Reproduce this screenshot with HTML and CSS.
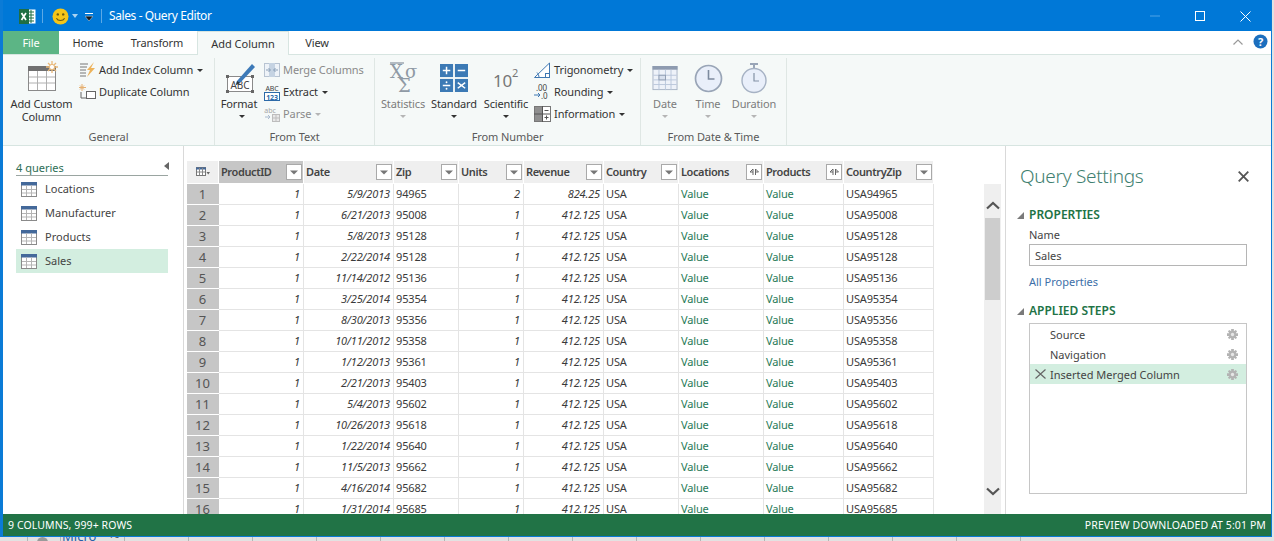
FILE: index.html
```html
<!DOCTYPE html>
<html lang="en">
<head>
<meta charset="utf-8">
<title>Sales - Query Editor</title>
<link rel="stylesheet" href="styles.css">
</head>
<body>
<svg class="sprites" width="0" height="0" aria-hidden="true">
  <symbol id="qtable" viewBox="0 0 16 15"><rect x=".5" y=".5" width="15" height="14" fill="#fff" stroke="#8a8a8a"/><rect x="0" y="0" width="16" height="3.5" fill="#44699a"/><path d="M5.5 3v11M10.5 3v11M1 7.5h14M1 11h14" stroke="#b5b5b5" fill="none"/></symbol>
  <symbol id="gear" viewBox="0 0 12 12"><path d="M4.500 0h3v2.500L9.500 1 11 2.500 9.500 4.500H12v3H9.500L11 9.500 9.500 11 7.500 9.500V12h-3V9.500L2.500 11 1 9.500l1.500-2H0v-3h2.500L1 2.500 2.500 1l2 1.500z" fill="#b3b3b3"/><circle cx="6" cy="6" r="1.800" fill="#e6e6e6"/></symbol>
  <symbol id="filt" viewBox="0 0 16 16"><rect x=".5" y=".5" width="15" height="15" fill="#fff" stroke="#a9a9a9"/><path d="M4 6.5h8L8 10.5z" fill="#777"/></symbol>
  <symbol id="expand" viewBox="0 0 16 16"><rect x=".5" y=".5" width="15" height="15" fill="#fff" stroke="#a9a9a9"/><path d="M7 5v6M7 5L4 8h3M9.500 5v6M9.500 5l3 3h-3" stroke="#666" fill="none"/></symbol>
</svg>
<div class="window">
  <header class="titlebar">
    <svg class="xl" width="17" height="17" viewBox="0 0 17 17"><rect x="6" y="1.500" width="10.500" height="14" fill="#fff"/><path d="M10 4h5M10 7h5M10 10h5M10 13h5M12 2v13" stroke="#1f6e43" stroke-width="1"/><rect x="0" y="1" width="10" height="15" fill="#1f6e43"/><path d="M2.500 5l4.500 7M7 5l-4.500 7" stroke="#fff" stroke-width="1.700"/></svg>
    <span class="qsep"></span>
    <svg class="smile" width="17" height="17" viewBox="0 0 17 17"><circle cx="8.500" cy="8.500" r="8" fill="#f5c518"/><circle cx="5.800" cy="6.400" r="1.200" fill="#6d5a10"/><circle cx="11.200" cy="6.400" r="1.200" fill="#6d5a10"/><path d="M4.400 10.200c1.600 3 6.600 3 8.200 0" stroke="#6d5a10" stroke-width="1.100" fill="none"/></svg>
    <svg class="smallcaret" width="6" height="4" viewBox="0 0 6 4"><path d="M0 0h6L3 4z" fill="#a8d3f2"/></svg>
    <svg class="qat" width="8" height="8" viewBox="0 0 8 8"><path d="M0 .5h8" stroke="#fff"/><path d="M0 3.200h8L4 8z" fill="#1a1a1a" stroke="#fff" stroke-width=".4"/></svg>
    <span class="qsep second"></span>
    <span class="wintitle">Sales - Query Editor</span>
    <div class="winbtns">
      <svg width="10" height="2" viewBox="0 0 10 2"><path d="M0 1h10" stroke="#4ea3e6"/></svg>
      <svg width="10" height="10" viewBox="0 0 10 10"><rect x=".5" y=".5" width="9" height="9" fill="none" stroke="#fff"/></svg>
      <svg width="11" height="11" viewBox="0 0 11 11"><path d="M.5.500l10 10M10.500.500l-10 10" stroke="#fff"/></svg>
    </div>
  </header>

  <nav class="tabs">
    <span class="tab tab-file">File</span>
    <span class="tab tab-home">Home</span>
    <span class="tab tab-transform">Transform</span>
    <span class="tab tab-active">Add Column</span>
    <span class="tab tab-view">View</span>
    <span class="tabs-end">
      <svg width="10" height="6" viewBox="0 0 10 6"><path d="M.5 5.500L5 1l4.500 4.500" stroke="#9a9a9a" fill="none" stroke-width="1.200"/></svg>
      <svg width="15" height="15" viewBox="0 0 15 15"><circle cx="7.500" cy="7.500" r="7" fill="#1c6fbe"/><text x="7.500" y="11.500" text-anchor="middle" class="helpq">?</text></svg>
    </span>
  </nav>

  <section class="ribbon">
    <div class="group g-general">
      <div class="group-body">
        <div class="big big-custom">
          <svg width="30" height="30" viewBox="0 0 30 30"><rect x=".5" y="5.500" width="27" height="24" fill="#fff" stroke="#8a8a8a"/><rect x="0" y="5" width="28" height="5" fill="#707070"/><path d="M9.500 10v19M18.500 10v19M1 16h26M1 22h26" stroke="#b0b0b0" fill="none"/><path d="M24 0v12M18 6h12M20 2l8 8M28 2l-8 8" stroke="#e9b878" stroke-width="1.300"/><circle cx="24" cy="6" r="2.600" fill="#fff" stroke="#e9b878"/></svg>
          <span class="big-label">Add Custom<br>Column</span>
        </div>
        <div class="smalls">
          <div class="small"><svg width="17" height="16" viewBox="0 0 17 16"><path d="M1 2h8M1 5h7M1 8h6M1 11h6M1 14h6" stroke="#777"/><path d="M15 0L8 8h3l-3 7 8-9h-4z" fill="#edb35b"/></svg><span>Add Index Column</span><i class="caret"></i></div>
          <div class="small"><svg width="17" height="16" viewBox="0 0 17 16"><path d="M3 0v7M0 3.500h7M1 1.500l4 4M5 1.500l-4 4" stroke="#e6b071"/><path d="M2 8v6h5" stroke="#666" fill="none"/><rect x="7.500" y="7.500" width="9" height="7" fill="#fff" stroke="#666"/></svg><span>Duplicate Column</span></div>
        </div>
      </div>
      <div class="group-label">General</div>
    </div>
    <div class="group g-text">
      <div class="group-body">
        <div class="big big-format">
          <svg width="32" height="34" viewBox="0 0 32 34"><rect x="1.500" y="15.500" width="25" height="15" fill="#fff" stroke="#8a8a8a"/><rect x="0" y="14" width="3" height="3" fill="#666"/><rect x="25" y="14" width="3" height="3" fill="#666"/><rect x="0" y="29" width="3" height="3" fill="#666"/><rect x="25" y="29" width="3" height="3" fill="#666"/><text x="14" y="28" text-anchor="middle" class="abc">ABC</text><path d="M11 20L26 3l3 3-15 16-4 2z" fill="#3d7ab8"/><path d="M11 20l-1 4 4-2z" fill="#333"/></svg>
          <span class="big-label">Format</span>
          <i class="caret caret-under"></i>
        </div>
        <div class="smalls">
          <div class="small dim"><svg width="16" height="14" viewBox="0 0 16 14"><rect x=".5" y=".5" width="15" height="13" fill="#eef3f8" stroke="#b8c4d2"/><rect x="5" y="0" width="6" height="14" fill="#c5d3e2"/><path d="M2 7h4M14 7h-4M4.500 5l2 2-2 2M11.500 5l-2 2 2 2" stroke="#8aa0b8" fill="none"/></svg><span>Merge Columns</span></div>
          <div class="small"><svg width="16" height="17" viewBox="0 0 16 17"><text x="8" y="7" text-anchor="middle" class="mini">ABC</text><rect x=".5" y="8.500" width="15" height="8" fill="#fff" stroke="#2c6aa8"/><text x="8" y="15.500" text-anchor="middle" class="mini blue">123</text></svg><span>Extract</span><i class="caret"></i></div>
          <div class="small dim"><svg width="16" height="15" viewBox="0 0 16 15"><text x="6" y="6" text-anchor="middle" class="mini dimt">abc</text><path d="M1 10h5M4 8l2 2-2 2" stroke="#a9bace" fill="none"/><rect x="8.500" y="7.500" width="7" height="7" fill="#e8e8e8" stroke="#bdbdbd"/><path d="M12 8v6M9 11h6" stroke="#bdbdbd"/></svg><span>Parse</span><i class="caret dimc"></i></div>
        </div>
      </div>
      <div class="group-label">From Text</div>
    </div>
    <div class="group g-number">
      <div class="group-body">
        <div class="big big-stats dim">
          <svg width="36" height="32" viewBox="0 0 36 32"><text x="5" y="17" class="sigma">X</text><path d="M5 2h14" stroke="#8f9aa5" stroke-width="1.300"/><text x="20" y="17" class="sigma">σ</text><text x="13" y="31" class="sigma">Σ</text></svg>
          <span class="big-label">Statistics</span>
          <i class="caret caret-under dimc"></i>
        </div>
        <div class="big big-standard">
          <svg width="28" height="28" viewBox="0 0 30 30"><rect width="14" height="14" fill="#3c7ab5"/><rect x="16" width="14" height="14" fill="#3c7ab5"/><rect y="16" width="14" height="14" fill="#3c7ab5"/><rect x="16" y="16" width="14" height="14" fill="#3c7ab5"/><path d="M3 7h8M7 3v8M19 7h8M3 23h8M19 20l8 6M27 20l-8 6" stroke="#fff" stroke-width="1.600"/><circle cx="7" cy="19.500" r="1" fill="#fff"/><circle cx="7" cy="26.500" r="1" fill="#fff"/></svg>
          <span class="big-label">Standard</span>
          <i class="caret caret-under"></i>
        </div>
        <div class="big big-sci">
          <svg width="30" height="30" viewBox="0 0 30 30"><text x="2" y="26" class="ten">10</text><text x="21" y="16" class="two">2</text></svg>
          <span class="big-label">Scientific</span>
          <i class="caret caret-under"></i>
        </div>
        <div class="smalls smalls-num">
          <div class="small"><svg width="17" height="16" viewBox="0 0 17 16"><path d="M.5 15.500L15.500 1v14.500z" fill="#fff" stroke="#3f78b2"/><rect x="11.500" y="11.500" width="4" height="4" fill="none" stroke="#3f78b2"/><path d="M5 15.500c0-2-1-4-2-5" stroke="#3f78b2" fill="none"/></svg><span>Trigonometry</span><i class="caret"></i></div>
          <div class="small"><svg width="17" height="16" viewBox="0 0 17 16"><text x="2" y="7" class="mini2">.00</text><text x="7" y="15" class="mini2">.0</text><path d="M0 11h6M4 9l2 2-2 2" stroke="#3f78b2" fill="none"/></svg><span>Rounding</span><i class="caret"></i></div>
          <div class="small"><svg width="17" height="16" viewBox="0 0 17 16"><rect x=".5" y=".5" width="16" height="15" fill="#fff" stroke="#777"/><rect x="1" y="1" width="7" height="7" fill="#8f8f8f"/><rect x="1" y="8" width="7" height="7" fill="#8f8f8f"/><path d="M8.500 0v16M0 8h16M10.500 4.500h4M10.500 11.500h4M12.500 9.500v4" stroke="#555"/></svg><span>Information</span><i class="caret"></i></div>
        </div>
      </div>
      <div class="group-label">From Number</div>
    </div>
    <div class="group g-date">
      <div class="group-body">
        <div class="big big-date dim">
          <svg width="26" height="25" viewBox="0 0 27 27"><rect x=".5" y=".5" width="26" height="25" fill="#eef2f9" stroke="#a6b2c4"/><rect width="27" height="4" fill="#8e9bb0"/><path d="M7 4v22M14 4v22M20 4v22M1 10h25M1 15h25M1 20h25" stroke="#b9c6da" fill="none"/><rect x="7" y="10" width="7" height="5" fill="#d8e0ee" stroke="#8e9bb0"/></svg>
          <span class="big-label">Date</span>
          <i class="caret caret-under dimc"></i>
        </div>
        <div class="big big-time dim">
          <svg width="29" height="29" viewBox="0 0 29 29"><circle cx="14.500" cy="14.500" r="13" fill="#e9effa" stroke="#99a5b7" stroke-width="1.700"/><path d="M14.500 6v9h6" stroke="#7d8b9f" stroke-width="1.600" fill="none"/></svg>
          <span class="big-label">Time</span>
          <i class="caret caret-under dimc"></i>
        </div>
        <div class="big big-dur dim">
          <svg width="26" height="31" viewBox="0 0 26 31"><rect x="9" y="0" width="8" height="2" fill="#99a5b7"/><rect x="12" y="2" width="2" height="3" fill="#99a5b7"/><circle cx="13" cy="17.500" r="12" fill="#e9effa" stroke="#a6b2c4" stroke-width="1.400"/><path d="M13 10v8h5" stroke="#8492a5" stroke-width="1.200" fill="none"/></svg>
          <span class="big-label">Duration</span>
          <i class="caret caret-under dimc"></i>
        </div>
      </div>
      <div class="group-label">From Date &amp; Time</div>
    </div>
  </section>

  <main class="content">
    <aside class="queries">
      <div class="q-head"><span>4 queries</span><svg width="5" height="8" viewBox="0 0 5 8"><path d="M5 0v8L0 4z" fill="#666"/></svg></div>
      <div class="q-item"><svg width="16" height="15"><use href="#qtable"/></svg><span>Locations</span></div>
      <div class="q-item"><svg width="16" height="15"><use href="#qtable"/></svg><span>Manufacturer</span></div>
      <div class="q-item"><svg width="16" height="15"><use href="#qtable"/></svg><span>Products</span></div>
      <div class="q-item q-sel"><svg width="16" height="15"><use href="#qtable"/></svg><span>Sales</span></div>
    </aside>

    <div class="grid-area">
      <table class="data">
        <colgroup><col class="c0"><col class="c1"><col class="c2"><col class="c3"><col class="c4"><col class="c5"><col class="c6"><col class="c7"><col class="c8"><col class="c9"></colgroup>
        <thead>
          <tr>
            <th class="corner"><svg width="14" height="9" viewBox="0 0 14 9"><rect x=".5" y=".5" width="9" height="8" fill="#fff" stroke="#777"/><path d="M0 1.500h10" stroke="#44699a" stroke-width="2"/><path d="M3.500 1v7M6.500 1v7M1 5h8" stroke="#888"/><path d="M10.500 5h3.500l-1.750 2.500z" fill="#666"/></svg></th>
            <th class="sel"><div class="th"><span>ProductID</span><svg width="16" height="16"><use href="#filt"/></svg></div></th>
            <th><div class="th"><span>Date</span><svg width="16" height="16"><use href="#filt"/></svg></div></th>
            <th><div class="th"><span>Zip</span><svg width="16" height="16"><use href="#filt"/></svg></div></th>
            <th><div class="th"><span>Units</span><svg width="16" height="16"><use href="#filt"/></svg></div></th>
            <th><div class="th"><span>Revenue</span><svg width="16" height="16"><use href="#filt"/></svg></div></th>
            <th><div class="th"><span>Country</span><svg width="16" height="16"><use href="#filt"/></svg></div></th>
            <th><div class="th"><span>Locations</span><svg width="16" height="16"><use href="#expand"/></svg></div></th>
            <th><div class="th"><span>Products</span><svg width="16" height="16"><use href="#expand"/></svg></div></th>
            <th><div class="th"><span>CountryZip</span><svg width="16" height="16"><use href="#filt"/></svg></div></th>
          </tr>
        </thead>
        <tbody>
          <tr><td class="rn">1</td><td class="num">1</td><td class="num">5/9/2013</td><td>94965</td><td class="num">2</td><td class="num">824.25</td><td>USA</td><td class="val">Value</td><td class="val">Value</td><td>USA94965</td></tr>
          <tr><td class="rn">2</td><td class="num">1</td><td class="num">6/21/2013</td><td>95008</td><td class="num">1</td><td class="num">412.125</td><td>USA</td><td class="val">Value</td><td class="val">Value</td><td>USA95008</td></tr>
          <tr><td class="rn">3</td><td class="num">1</td><td class="num">5/8/2013</td><td>95128</td><td class="num">1</td><td class="num">412.125</td><td>USA</td><td class="val">Value</td><td class="val">Value</td><td>USA95128</td></tr>
          <tr><td class="rn">4</td><td class="num">1</td><td class="num">2/22/2014</td><td>95128</td><td class="num">1</td><td class="num">412.125</td><td>USA</td><td class="val">Value</td><td class="val">Value</td><td>USA95128</td></tr>
          <tr><td class="rn">5</td><td class="num">1</td><td class="num">11/14/2012</td><td>95136</td><td class="num">1</td><td class="num">412.125</td><td>USA</td><td class="val">Value</td><td class="val">Value</td><td>USA95136</td></tr>
          <tr><td class="rn">6</td><td class="num">1</td><td class="num">3/25/2014</td><td>95354</td><td class="num">1</td><td class="num">412.125</td><td>USA</td><td class="val">Value</td><td class="val">Value</td><td>USA95354</td></tr>
          <tr><td class="rn">7</td><td class="num">1</td><td class="num">8/30/2013</td><td>95356</td><td class="num">1</td><td class="num">412.125</td><td>USA</td><td class="val">Value</td><td class="val">Value</td><td>USA95356</td></tr>
          <tr><td class="rn">8</td><td class="num">1</td><td class="num">10/11/2012</td><td>95358</td><td class="num">1</td><td class="num">412.125</td><td>USA</td><td class="val">Value</td><td class="val">Value</td><td>USA95358</td></tr>
          <tr><td class="rn">9</td><td class="num">1</td><td class="num">1/12/2013</td><td>95361</td><td class="num">1</td><td class="num">412.125</td><td>USA</td><td class="val">Value</td><td class="val">Value</td><td>USA95361</td></tr>
          <tr><td class="rn">10</td><td class="num">1</td><td class="num">2/21/2013</td><td>95403</td><td class="num">1</td><td class="num">412.125</td><td>USA</td><td class="val">Value</td><td class="val">Value</td><td>USA95403</td></tr>
          <tr><td class="rn">11</td><td class="num">1</td><td class="num">5/4/2013</td><td>95602</td><td class="num">1</td><td class="num">412.125</td><td>USA</td><td class="val">Value</td><td class="val">Value</td><td>USA95602</td></tr>
          <tr><td class="rn">12</td><td class="num">1</td><td class="num">10/26/2013</td><td>95618</td><td class="num">1</td><td class="num">412.125</td><td>USA</td><td class="val">Value</td><td class="val">Value</td><td>USA95618</td></tr>
          <tr><td class="rn">13</td><td class="num">1</td><td class="num">1/22/2014</td><td>95640</td><td class="num">1</td><td class="num">412.125</td><td>USA</td><td class="val">Value</td><td class="val">Value</td><td>USA95640</td></tr>
          <tr><td class="rn">14</td><td class="num">1</td><td class="num">11/5/2013</td><td>95662</td><td class="num">1</td><td class="num">412.125</td><td>USA</td><td class="val">Value</td><td class="val">Value</td><td>USA95662</td></tr>
          <tr><td class="rn">15</td><td class="num">1</td><td class="num">4/16/2014</td><td>95682</td><td class="num">1</td><td class="num">412.125</td><td>USA</td><td class="val">Value</td><td class="val">Value</td><td>USA95682</td></tr>
          <tr><td class="rn">16</td><td class="num">1</td><td class="num">1/31/2014</td><td>95685</td><td class="num">1</td><td class="num">412.125</td><td>USA</td><td class="val">Value</td><td class="val">Value</td><td>USA95685</td></tr>
        </tbody>
      </table>
      <div class="scrollbar">
        <svg class="arrow-up" width="14" height="9" viewBox="0 0 14 9"><path d="M1 7.500l6-5.500 6 5.500" stroke="#555" stroke-width="2.200" fill="none"/></svg>
        <div class="thumb"></div>
        <svg class="arrow-down" width="14" height="9" viewBox="0 0 14 9"><path d="M1 1.500L7 7l6-5.500" stroke="#555" stroke-width="2.200" fill="none"/></svg>
      </div>
    </div>

    <aside class="settings">
      <div class="s-title"><span>Query Settings</span><svg width="11" height="11" viewBox="0 0 11 11"><path d="M.7.700l9.600 9.600M10.300.700L.7 10.300" stroke="#555" stroke-width="1.800"/></svg></div>
      <div class="s-head"><svg width="7" height="7" viewBox="0 0 7 7"><path d="M7 0v7H0z" fill="#7a7a7a"/></svg><span>PROPERTIES</span></div>
      <div class="s-name">Name</div>
      <div class="s-input">Sales</div>
      <div class="s-link">All Properties</div>
      <div class="s-head s-head2"><svg width="7" height="7" viewBox="0 0 7 7"><path d="M7 0v7H0z" fill="#7a7a7a"/></svg><span>APPLIED STEPS</span></div>
      <div class="steps">
        <div class="step"><span>Source</span><svg width="11" height="11"><use href="#gear"/></svg></div>
        <div class="step"><span>Navigation</span><svg width="11" height="11"><use href="#gear"/></svg></div>
        <div class="step step-sel"><svg class="step-x" width="11" height="10" viewBox="0 0 11 10"><path d="M.5.500l10 9M10.500.500l-10 9" stroke="#666" stroke-width="1.200"/></svg><span>Inserted Merged Column</span><svg width="11" height="11"><use href="#gear"/></svg></div>
      </div>
    </aside>
  </main>

  <footer class="status"><span>9 COLUMNS, 999+ ROWS</span><span>PREVIEW DOWNLOADED AT 5:01 PM</span></footer>
</div>
<div class="behind"><span class="behind-icon"></span><span class="behind-text">Micro</span><span class="behind-num">16</span></div>
</body>
</html>
```
FILE: styles.css
```css
* { box-sizing: border-box; }
html, body { margin: 0; height: 541px; overflow: hidden; }
body {
  background: #e2e2e2;
  font-family: "Noto Sans", "Open Sans", sans-serif;
  font-size: 11px;
  line-height: 14px;
  color: #3a3a3a;
}
.sprites { position: absolute; }
.window {
  width: 1272px;
  height: 537px;
  background: #fff;
  border: solid #0b7bd6;
  border-width: 0 1px 1px 3px;
  display: flex;
  flex-direction: column;
  overflow: hidden;
}
.titlebar {
  height: 31px;
  flex: none;
  margin-left: -3px;
  margin-right: -1px;
  background: #0078d7;
  display: flex;
  align-items: center;
  padding-left: 19px;
  padding-top: 1px;
  color: #fff;
}
.xl { margin-right: 6px; }
.qsep { width: 1px; height: 14px; background: #5ca9e6; }
.smile { margin-left: 9px; }
.smallcaret { margin-left: 3px; }
.qat { margin-left: 7px; margin-top: 2px; }
.qsep.second { margin-left: 8px; height: 14px; }
.wintitle { margin-left: 7px; font-size: 12px; letter-spacing: -.4px; }
.winbtns { margin-left: auto; display: flex; align-items: center; gap: 35px; padding-right: 21px; }
.tabs {
  height: 24px;
  flex: none;
  display: flex;
  border-bottom: 1px solid #d7e5e1;
  position: relative;
}
.tab { height: 23px; line-height: 24px; text-align: center; color: #333; letter-spacing: -.1px; }
.tab-file { width: 56px; background: #5cb585; color: #fff; }
.tab-home { width: 58px; }
.tab-transform { width: 80px; }
.tab-active {
  width: 92px;
  height: 24px;
  background: #f5f9f8;
  border: 1px solid #d7e5e1;
  border-bottom: 0;
  letter-spacing: 0;
}
.tab-view { width: 56px; }
.tabs-end { margin-left: auto; display: flex; align-items: center; gap: 10px; padding: 0 3px 2px 0; }
.helpq { font: bold 11px "Noto Sans", sans-serif; fill: #fff; }
.ribbon {
  height: 91px;
  flex: none;
  background: #f5f9f8;
  border-bottom: 1px solid #d7e5e1;
  display: flex;
  padding-top: 3px;
}
.group {
  border-right: 1px solid #dfe7e4;
  height: 87px;
  display: flex;
  flex-direction: column;
}
.g-general { width: 212px; }
.g-text { width: 160px; }
.g-number { width: 266px; }
.g-date { width: 146px; }
.group-body { flex: 1; display: flex; min-height: 0; }
.group-label { text-align: center; height: 15px; line-height: 14px; color: #5a5a5a; letter-spacing: -.1px; }
.big {
  display: flex;
  flex-direction: column;
  align-items: center;
  position: relative;
  padding-top: 3px;
  color: #333;
  letter-spacing: -.15px;
}
.big > svg { flex: none; }
.big-label { position: absolute; top: 39px; left: -10px; right: -10px; text-align: center; line-height: 13px; white-space: nowrap; }
.caret-under { position: absolute; top: 57px; left: 50%; margin-left: -3px; }
.caret {
  display: inline-block;
  width: 0; height: 0;
  border: 3px solid transparent;
  border-top: 3px solid #333;
  border-bottom: 0;
}
.dimc { border-top-color: #b5b5b5; }
.dim { color: #7c7c7c; }
.big-custom { width: 76px; padding-left: 3px; }
.big-custom .big-label { margin-left: 1px; }
.big-format { width: 49px; padding-left: 4px; }
.big-format .big-label, .big-format .caret-under { margin-left: -1px; }
.big-stats { width: 46px; margin-left: 5px; }
.big-standard { width: 50px; margin-left: 3px; padding-top: 6px; }
.big-sci { width: 52px; margin-left: 1px; }
.big-date { width: 44px; margin-left: 2px; padding-top: 8px; }
.big-time { width: 40px; margin-left: 1px; padding-top: 6px; }
.big-dur { width: 50px; margin-left: 1px; padding-top: 5px; }
.smalls { display: flex; flex-direction: column; padding-top: 1px; }
.smalls-num { margin-left: 2px; }
.small {
  height: 22px;
  display: flex;
  align-items: center;
  white-space: nowrap;
  color: #333;
  letter-spacing: -.1px;
}
.small.dim { color: #8a8a8a; }
.small > svg { flex: none; margin-right: 3px; }
.small .caret { margin-left: 4px; }
.abc { font: 10px "Noto Sans", sans-serif; fill: #444; }
.mini { font: 7px "Noto Sans", sans-serif; fill: #444; }
.mini.blue { fill: #2c6aa8; font-weight: 700; }
.mini.dimt { fill: #a5a5a5; }
.mini2 { font: 8px "Noto Sans", sans-serif; fill: #444; }
.sigma { font: 18px "DejaVu Serif", serif; fill: #8f9aa5; }
.ten { font: 17px "Noto Sans", sans-serif; fill: #777; }
.two { font: 11px "Noto Sans", sans-serif; fill: #777; }
.content { flex: 1; min-height: 0; display: flex; overflow: hidden; }
.queries {
  width: 181px;
  flex: none;
  border-right: 1px solid #d9d9d9;
  padding: 15px 15px 0 13px;
}
.q-head {
  display: flex;
  justify-content: space-between;
  align-items: flex-start;
  height: 15px;
  border-bottom: 1px solid #9aa5a1;
  color: #2e6e55;
  margin-bottom: 1px;
  line-height: 14px;
}
.q-head svg { margin: 1px -1px 0 0; }
.q-item {
  height: 24px;
  display: flex;
  align-items: center;
  gap: 8px;
  padding-left: 5px;
  font-size: 11px;
  color: #444;
}
.q-sel { background: #d3eee0; }
.grid-area { flex: 1; min-width: 0; position: relative; padding: 15px 0 0 3px; }
.data { border-collapse: separate; border-spacing: 0; table-layout: fixed; width: 747px; }
.c0 { width: 32px; }
.c1 { width: 85px; }
.c2 { width: 90px; }
.c3 { width: 65px; }
.c4 { width: 65px; }
.c5 { width: 80px; }
.c6 { width: 75px; }
.c7 { width: 85px; }
.c8 { width: 80px; }
.c9 { width: 90px; }
.data th {
  height: 23px;
  background: #efefef;
  border-right: 1px solid #fff;
  border-bottom: 1px solid #fff;
  padding: 0 0 1px;
  font-weight: 600;
  text-align: left;
  color: #444;
  letter-spacing: -.4px;
}
.data th.sel { background: #c6c6c6; }
.data th.corner { text-align: center; }
.corner svg { display: block; margin: 0 auto; }
.th { display: flex; justify-content: space-between; align-items: center; padding: 0 1px 0 2px; }
.th svg { flex: none; }
.data td {
  height: 21px;
  padding: 0 3px 0 2px;
  border-right: 1px solid #e4e4e4;
  border-bottom: 1px solid #e4e4e4;
  white-space: nowrap;
  color: #3a3a3a;
  letter-spacing: -.15px;
}
.data td.num { text-align: right; font-style: italic; }
.data td.val { color: #1f7a57; }
.data td.rn {
  background: #c6c6c6;
  text-align: center;
  font-size: 13px;
  color: #555;
  border-right: 0;
  border-bottom: 1px solid #fff;
  letter-spacing: 0;
}
.scrollbar {
  position: absolute;
  left: 800px;
  top: 38px;
  bottom: 0;
  width: 17px;
  background: #efefef;
  display: flex;
  flex-direction: column;
  align-items: center;
}
.arrow-up { margin-top: 17px; flex: none; }
.thumb { width: 15px; height: 82px; background: #cdcdcd; margin-top: 8px; }
.arrow-down { position: absolute; bottom: 18px; }
.settings {
  width: 266px;
  flex: none;
  border-left: 1px solid #d9d9d9;
  padding: 0 24px 0 14px;
  position: relative;
}
.s-title {
  display: flex;
  justify-content: space-between;
  align-items: center;
  height: 28px;
  margin-top: 16px;
  font-size: 19px;
  font-weight: 300;
  color: #3f7f70;
  letter-spacing: -.3px;
  margin-right: -2px;
}
.s-head {
  display: flex;
  align-items: center;
  gap: 5px;
  margin-top: 17px;
  height: 16px;
  margin-left: -3px;
  font-size: 12px;
  font-weight: 600;
  color: #217346;
}
.s-name { margin: 5px 0 0 9px; height: 14px; color: #444; }
.s-input {
  height: 22px;
  margin: 2px 0 0 9px;
  border: 1px solid #b5b5b5;
  padding: 4px 5px 0;
  color: #444;
}
.s-link { margin: 9px 0 0 9px; color: #3d6fa8; height: 14px; }
.s-head.s-head2 { margin-top: 14px; }
.steps {
  margin: 4px 0 0 9px;
  height: 171px;
  border: 1px solid #c6c6c6;
}
.step {
  height: 20px;
  display: flex;
  align-items: center;
  padding: 0 8px 0 20px;
  color: #444;
  position: relative;
}
.step span { flex: 1; padding-top: 2px; }
.step-sel { background: #d3eee0; }
.step-x { position: absolute; left: 5px; top: 5px; }
.status {
  height: 22px;
  flex: none;
  background: #217346;
  color: #fff;
  display: flex;
  align-items: center;
  justify-content: space-between;
  padding: 0 5px;
  font-size: 10.5px;
  letter-spacing: .1px;
}
.behind {
  height: 4px;
  overflow: hidden;
  display: flex;
  margin-left: 27px;
  width: 994px;
  color: #2a5ea8;
  font-size: 13px;
  line-height: 13px;
  border-left: 1px solid #b5b5b5;
  background: linear-gradient(90deg, #b5b5b5 1px, transparent 1px) 96px 0 / 64px 100% repeat-x;
}
.behind-icon { width: 11px; height: 11px; flex: none; margin: 0 0 0 9px; border-radius: 50%; background: #9a9a9a; }
.behind-text { margin: -7px 0 0 14px; }
.behind-num { margin: -9px 0 0 12px; font-size: 10px; color: #555; }
```
